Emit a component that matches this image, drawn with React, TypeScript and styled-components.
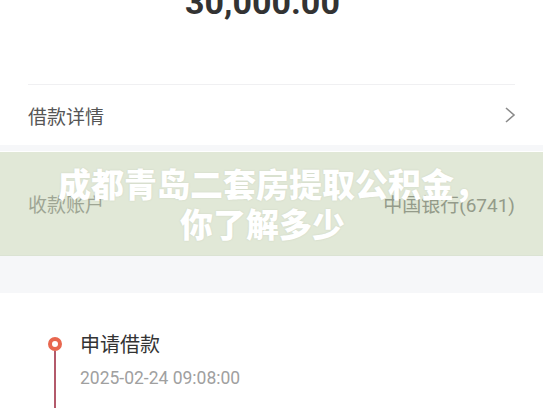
import React from "react";
import styled, { createGlobalStyle } from "styled-components";

const Global = createGlobalStyle`
  html, body { margin: 0; padding: 0; background: #f6f7f9; overflow: hidden; }
  body { font-family: Roboto, "Noto Sans CJK SC", sans-serif; }
`;

const Page = styled.div`
  width: 543px;
  height: 408px;
  overflow: hidden;
  position: relative;
  display: flex;
  flex-direction: column;
  gap: 6px;
`;

const Card = styled.div<{ $h?: number; $top?: number }>`
  background: #ffffff;
  display: flex;
  flex-direction: column;
  ${(p) => (p.$h ? `height: ${p.$h}px;` : "flex: 1;")}
  ${(p) => (p.$top ? `margin-top: ${p.$top}px;` : "")}
`;

const Amount = styled.div`
  margin-top: -19px;
  height: 103px;
  padding-right: 18px;
  text-align: center;
  font-family: Roboto, sans-serif;
  font-weight: 700;
  font-size: 34px;
  line-height: 42px;
  color: #333333;
`;

const Divider = styled.div`
  height: 1px;
  margin: 0 28px;
  background: #f0f0f2;
`;

const Row = styled.div<{ $h: number }>`
  height: ${(p) => p.$h}px;
  padding: 0 28px;
  display: flex;
  align-items: center;
  justify-content: space-between;
`;

const Label = styled.span<{ $muted?: boolean }>`
  font-family: "Noto Sans CJK SC", sans-serif;
  font-size: 19px;
  color: ${(p) => (p.$muted ? "#9a9a9a" : "#555555")};
`;

const Value = styled.span`
  font-family: Roboto, "Noto Sans CJK SC", sans-serif;
  font-size: 19px;
  color: #8a8a8a;
`;

const Chevron = styled.svg`
  width: 14px;
  height: 18px;
  margin-right: -2px;
`;

const Banner = styled.div`
  position: absolute;
  left: 0;
  right: 0;
  top: 152px;
  height: 104px;
  background: rgba(168, 188, 138, 0.34);
  display: flex;
  flex-direction: column;
  align-items: center;
  justify-content: center;
  padding-bottom: 2px;
  padding-right: 18px;
  box-sizing: border-box;
`;

const BannerText = styled.div<{ $shift?: number }>`
  font-family: "Noto Sans CJK SC", sans-serif;
  font-weight: 900;
  font-size: 33px;
  line-height: 40px;
  color: #ffffff;
  text-align: center;
  text-shadow: 0 0 2px rgba(120, 130, 110, 0.2);
  white-space: nowrap;
  margin-left: ${(p) => (p.$shift ?? 0) * 2}px;
`;

const Timeline = styled.div`
  padding: 30px 0 0 48px;
  display: flex;
  gap: 18px;
`;

const Rail = styled.div`
  width: 14px;
  display: flex;
  flex-direction: column;
  align-items: center;
  padding-top: 14px;
`;

const Dot = styled.div`
  width: 14px;
  height: 14px;
  box-sizing: border-box;
  border-radius: 50%;
  border: 4px solid #e8674f;
  background: #fff;
`;

const Line = styled.div`
  width: 2px;
  height: 80px;
  background: #b35a6b;
  margin-left: -1px;
`;

const Step = styled.div`
  display: flex;
  flex-direction: column;
`;

const StepTitle = styled.div`
  font-family: "Noto Sans CJK SC", sans-serif;
  font-size: 20px;
  line-height: 42px;
  color: #333333;
`;

const StepTime = styled.div`
  font-family: Roboto, sans-serif;
  font-size: 17.5px;
  line-height: 26px;
  color: #a0a0a0;
`;

export default function App() {
  return (
    <>
      <Global />
      <Page>
        <Card $h={146}>
          <Amount>30,000.00</Amount>
          <Divider />
          <Row $h={60}>
            <Label>借款详情</Label>
            <Chevron viewBox="0 0 14 18">
              <path d="M3 2 L11 9 L3 16" fill="none" stroke="#8a8a8a" strokeWidth="1.6" />
            </Chevron>
          </Row>
        </Card>
        <Card $h={104}>
          <Row $h={104}>
            <Label $muted>收款账户</Label>
            <Value>中国银行(6741)</Value>
          </Row>
        </Card>
        <Card $top={32}>
          <Timeline>
            <Rail>
              <Dot />
              <Line />
            </Rail>
            <Step>
              <StepTitle>申请借款</StepTitle>
              <StepTime>2025-02-24 09:08:00</StepTime>
            </Step>
          </Timeline>
        </Card>
        <Banner>
          <BannerText $shift={10}>成都青岛二套房提取公积金，</BannerText>
          <BannerText>你了解多少</BannerText>
        </Banner>
      </Page>
    </>
  );
}
